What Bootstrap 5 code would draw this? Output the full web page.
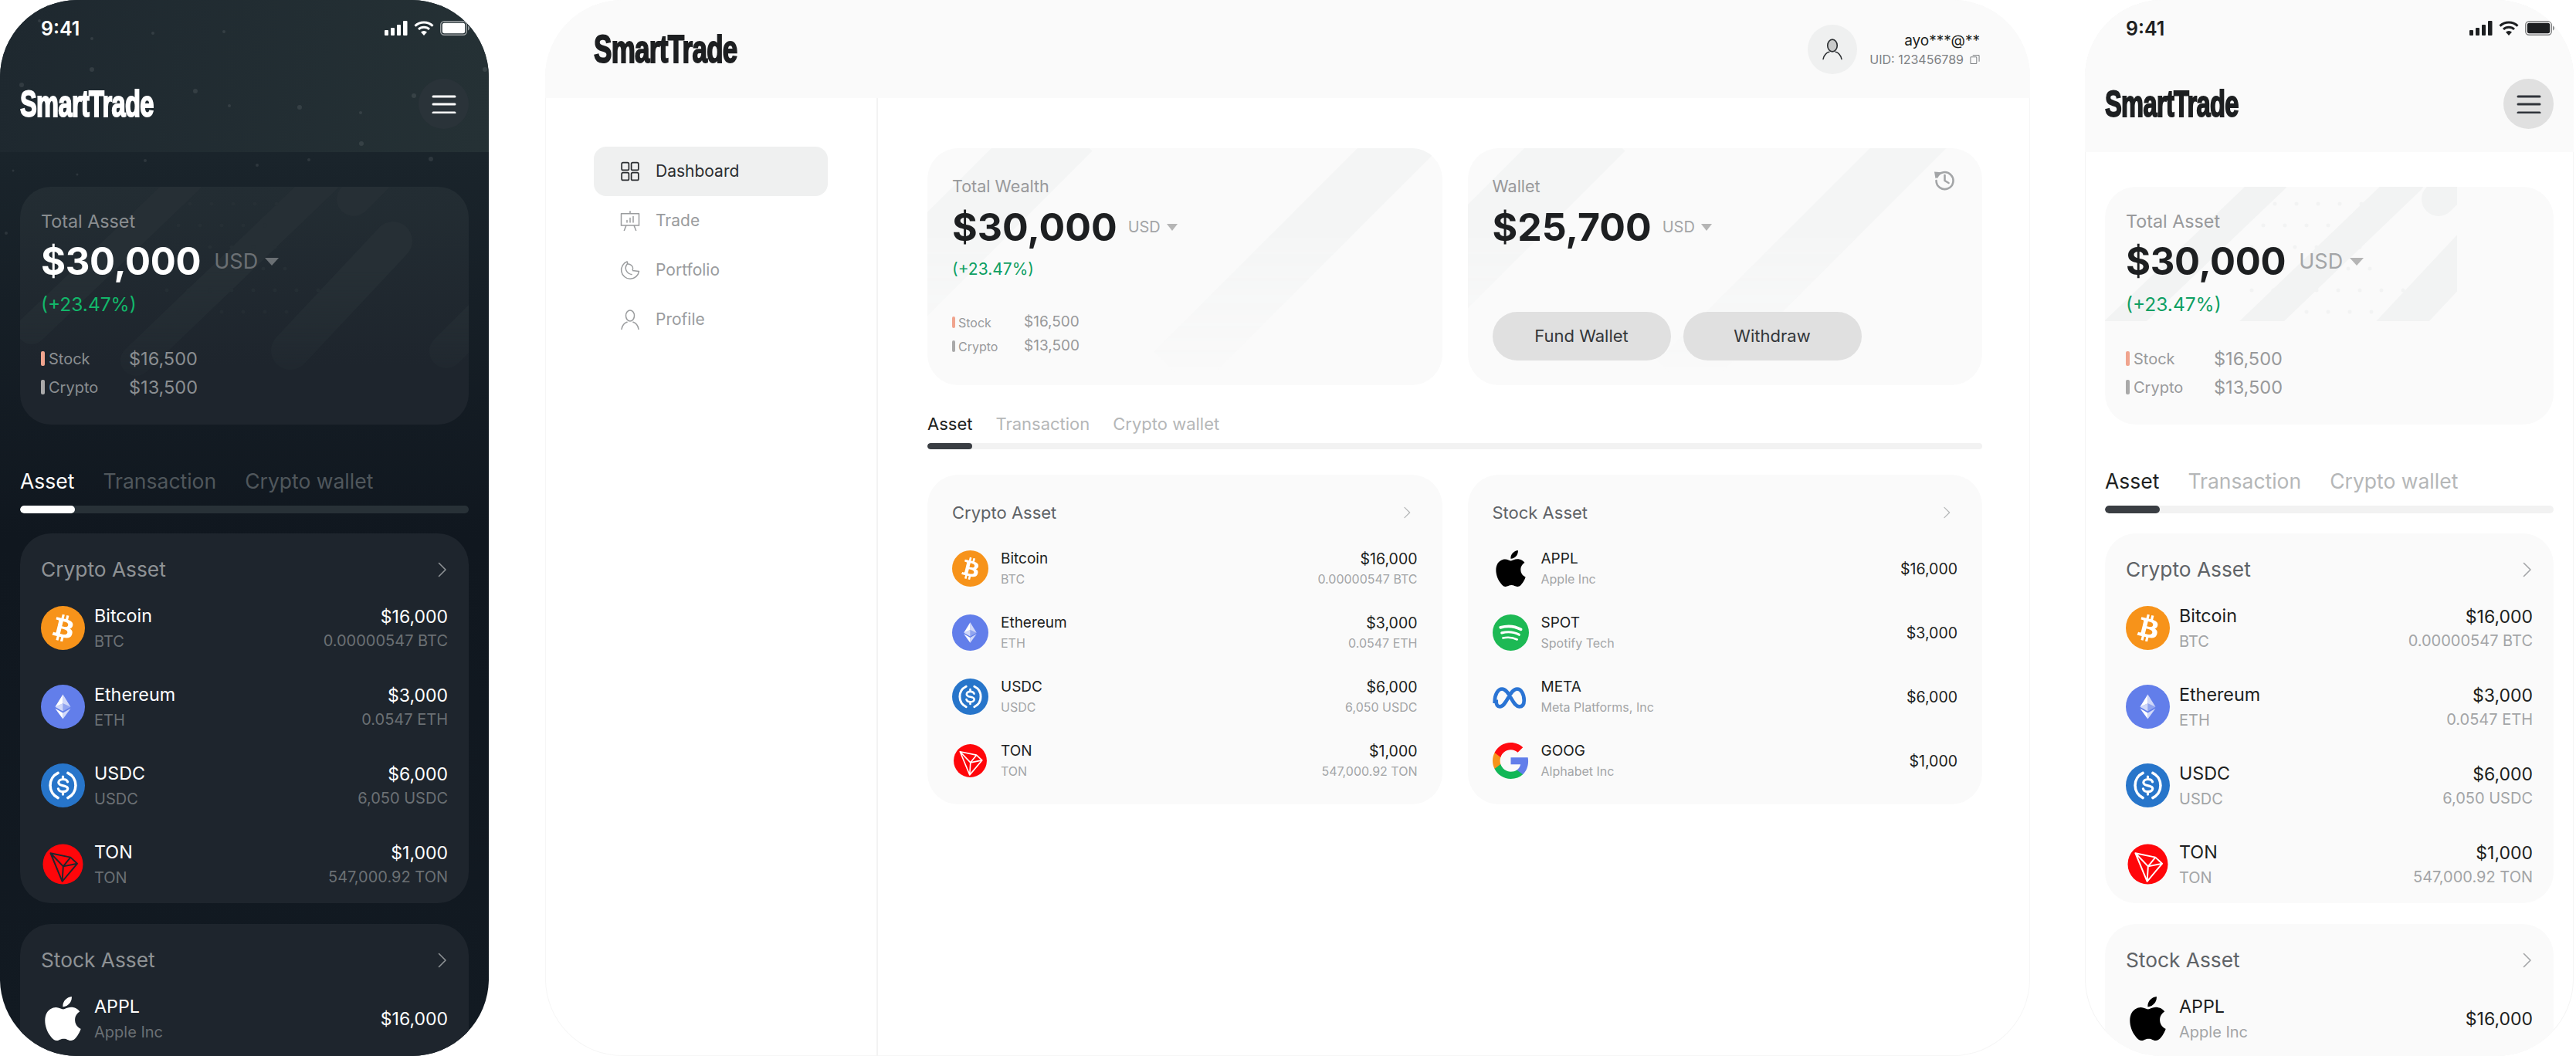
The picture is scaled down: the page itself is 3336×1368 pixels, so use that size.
<!DOCTYPE html>
<html lang="en">
<head>
<meta charset="UTF-8" />
<title>SmartTrade</title>
<link href="https://cdn.jsdelivr.net/npm/bootstrap@5.3.6/dist/css/bootstrap.min.css" rel="stylesheet" crossorigin="anonymous" />
<style>
  html, body { height: 1368px; }
  body { width: 3336px; overflow: hidden; background: #fff; font-family: Inter, "Noto Sans", sans-serif; }
  .shots { width: 3336px; height: 1368px; padding-right: 3px; }

  /* colour sets */
  .tone-dark { --ink:#fff; --title:#8e9295; --muted:#8a8e91; --dim:#6b7074; --faint:#50575c; --frame:#131b22; --bar:#1f2a30; --panel:#1e252d; --track:#283137; --active:#fff; --menu:#2a3339; --menu-line:#fff; --stripe:#262f35; --caret:#6b7074; --gain:#12b76a; }
  .tone-light { --ink:#1d1f21; --title:#5f6367; --muted:#98999b; --dim:#a3a5a7; --faint:#b5b7b8; --frame:#fff; --bar:#fafafa; --panel:#fafafa; --track:#f2f2f2; --active:#3a3e43; --menu:#e0e0e0; --menu-line:#30343a; --stripe:#f2f3f3; --caret:#b5b5b5; --gain:#0e9f63; }

  .brand-word { display: inline-block; font-family: "Liberation Sans", Arial, sans-serif; font-weight: 700; font-size: 48px; line-height: 1; letter-spacing: -1px; color: var(--ink); -webkit-text-stroke: 2px var(--ink); transform: scaleX(.68); transform-origin: left center; white-space: nowrap; }
  .web-top .brand-word { font-size: 50px; transform: scaleX(.7); }

  /* phone frames */
  .phone-frame { position: relative; flex: none; width: 633px; height: 1368px; border-radius: 100px; overflow: hidden; background: var(--frame); color: var(--ink); }
  .tone-dark.phone-frame { background: linear-gradient(180deg, #1a242b 200px, #10171f 700px, #121a22 100%); }
  .tone-light.phone-frame { box-shadow: inset 0 0 0 1px #f4f4f4; }
  .tone-dark .top-bar { background: linear-gradient(100deg, #1e282f, #253135); }
  .tone-light .top-bar { background: var(--bar); }
  .status-line { height: 72px; padding: 0 25px 0 53px; }
  .status-time { font-size: 25px; font-weight: 600; line-height: 1; padding-top: 2px; }
  .brand-line { height: 125px; padding: 0 26px; }
  .menu-btn { width: 65px; height: 65px; background: var(--menu); color: var(--menu-line); padding: 0; border: 0; }
  .star-field { position: absolute; left: 0; top: 0; pointer-events: none; }
  .phone-body { position: relative; padding: 45px 26px 0; }

  /* balance card */
  .balance-card { position: relative; overflow: hidden; background: var(--panel); border: 0; border-radius: 40px; }
  .tone-dark .balance-card { background: linear-gradient(180deg, #232d33, #1e252d 75%); }
  .card-stripes { position: absolute; left: 0; top: 0; color: var(--stripe); -webkit-mask-image: linear-gradient(to bottom, #000 35%, transparent 95%); mask-image: linear-gradient(to bottom, #000 35%, transparent 95%); }
  .tone-light .phone-body .card-stripes { -webkit-mask-image: none; mask-image: none; }
  .balance-inner { position: relative; }
  .phone-body .balance-card { height: 308px; }
  .phone-body .balance-inner { padding: 30px 27px 0; }
  .label-text { color: var(--muted); font-size: 23.3px; line-height: 30px; }
  .amount-line { height: 56px; margin-top: 9px; }
  .amount-value { font-size: 49px; font-weight: 700; letter-spacing: -.3px; line-height: 56px; color: var(--ink); }
  .unit-text { font-size: 27px; color: var(--dim); margin-left: 17px; }
  .unit-caret { width: 0; height: 0; margin-left: 9px; border-left: 9px solid transparent; border-right: 9px solid transparent; border-top: 10px solid var(--caret); }
  .gain-text { color: var(--gain); font-size: 24.5px; line-height: 30px; margin-top: 12px; }
  .split-list { margin-top: 37px; }
  .split-row { height: 37px; }
  .split-bar { width: 5px; height: 19px; border-radius: 2px; background: #a9a9a9; margin-right: 5px; }
  .split-bar.is-stock { background: #f0a48e; }
  .split-name { width: 104px; color: var(--muted); font-size: 20px; }
  .split-sum { color: var(--muted); font-size: 23.5px; }

  /* tabs */
  .tab-strip { margin-top: 55px; gap: 37px; line-height: 36px; font-size: 26.5px; color: var(--faint); }
  .tab-strip .is-on { color: var(--ink); }
  .tab-track { height: 10px; margin-top: 14px; border-radius: 5px; background: var(--track); }
  .tab-track .progress-bar { background: var(--active); border-radius: 5px; }

  /* asset cards */
  .asset-card { background: var(--panel); border: 0; border-radius: 40px; }
  .phone-body .asset-card { margin-top: 26px; padding: 32px 27px 0; height: 479px; }
  .phone-body .asset-card + .asset-card { margin-top: 27px; }
  .asset-title { color: var(--title); font-size: 26.3px; line-height: 30px; }
  .asset-rows { margin-top: 9px; --bs-list-group-bg: transparent; --bs-list-group-border-width: 0; --bs-list-group-item-padding-x: 0; --bs-list-group-item-padding-y: 0; --bs-list-group-color: var(--ink); }
  .asset-row { height: 102px; }
  .coin-mark { width: 57px; height: 57px; flex: none; margin-right: 12px; }
  .asset-name { font-size: 23.3px; line-height: 30px; margin-top: 2px; }
  .asset-sub { color: var(--dim); font-size: 20px; line-height: 30px; margin-top: 3px; }
  .asset-val { font-size: 23px; line-height: 30px; margin-top: 2px; }
  .asset-sub-val { color: var(--dim); font-size: 20px; line-height: 30px; margin-top: 1px; }

  /* desktop frame */
  .web-frame { flex: none; width: 1923px; height: 1368px; margin-left: 2px; border-radius: 100px; overflow: hidden; background: #fff; box-shadow: inset 0 0 0 1px #f6f6f6; color: var(--ink); }
  .web-top { height: 127px; padding: 0 65px 0 63px; background: var(--bar); }
  .avatar-btn { width: 64px; height: 64px; background: #eff0f0; }
  .user-block { padding-top: 3px; }
  .user-mail { font-size: 19px; line-height: 24px; color: #1d1f21; }
  .user-uid { font-size: 16px; line-height: 24px; color: #7d8083; }
  .web-main { height: 1241px; }
  .side-rail { width: 431px; flex: none; border-right: 2px solid #f3f3f3; padding: 63px 63px 0 63px; }
  .side-rail .nav-link { height: 64px; padding: 0 0 0 34px; gap: 20px; border-radius: 16px; font-size: 21px; color: #9a9c9e; }
  .side-rail .nav-link.active { background: #eff0f0; color: #2b2e31; }
  .web-content { flex: 1; padding: 65px 62px 0 64px; }
  .web-grid { display: grid; grid-template-columns: 1fr 1fr; column-gap: 33px; }
  .web-content .balance-card { height: 307px; }
  .web-content .balance-inner { padding: 34px 32px 32px; height: 100%; }
  .web-content .card-stripes { color: #f4f5f5; }
  .web-content .label-text { font-size: 21.5px; }
  .web-content .amount-line { margin-top: 10px; }
  .web-content .amount-value { font-size: 50px; letter-spacing: 0; }
  .web-content .unit-text { font-size: 20px; margin-left: 14px; }
  .web-content .unit-caret { margin-left: 8px; border-width: 9px 7.5px 0; }
  .web-content .gain-text { font-size: 21px; }
  .web-content .split-list { margin-top: 38px; }
  .web-content .split-row { height: 31px; }
  .web-content .split-bar { width: 4px; height: 15px; margin-right: 4px; }
  .web-content .split-name { width: 85px; font-size: 16px; }
  .web-content .split-sum { font-size: 19px; }
  .history-mark { width: 28px; height: 28px; color: #a3a5a7; margin: -7px 3px 0 0; }
  .wallet-btn { width: 231px; height: 63px; padding: 0; border: 0; background: #e0e0e0; color: #34373a; font-size: 22px; }
  .web-content .tab-strip { margin-top: 35px; gap: 30px; font-size: 22px; line-height: 30px; }
  .web-content .tab-track { height: 8px; margin-top: 10px; }
  .web-content .asset-card { margin-top: 33px; height: 427px; padding: 34px 32px 0; }
  .web-content .asset-title { font-size: 22px; }
  .web-content .asset-rows { margin-top: 16px; }
  .web-content .asset-row { height: 83px; }
  .web-content .coin-mark { width: 47px; height: 47px; margin-right: 16px; }
  .web-content .asset-name { font-size: 19px; line-height: 26px; margin-top: 0; }
  .web-content .asset-sub { font-size: 16px; line-height: 26px; margin-top: 0; }
  .web-content .asset-val { font-size: 19.5px; line-height: 26px; margin-top: 0; }
  .web-content .asset-sub-val { font-size: 16px; line-height: 26px; margin-top: 0; }
</style>
</head>
<body>

<!-- icon sheet, reused below with <use> -->
<svg width="0" height="0" class="d-block" aria-hidden="true">
  <symbol id="i-btc" viewBox="0 0 32 32"><circle cx="16" cy="16" r="16" fill="#f7931a"/><path fill="#fff" d="M23.189 14.02c.314-2.096-1.283-3.223-3.465-3.975l.708-2.84-1.728-.43-.69 2.765c-.454-.114-.92-.22-1.385-.326l.695-2.783L15.596 6l-.708 2.839c-.376-.086-.746-.17-1.104-.26l.002-.009-2.384-.595-.46 1.846s1.283.294 1.256.312c.7.175.826.638.805 1.006l-.806 3.235c.048.012.11.03.18.057l-.183-.045-1.13 4.532c-.086.212-.303.531-.793.41.018.025-1.256-.313-1.256-.313l-.858 1.978 2.25.561c.418.105.828.215 1.231.318l-.715 2.872 1.727.43.708-2.84c.472.127.93.245 1.378.357l-.706 2.828 1.728.43.715-2.866c2.948.558 5.164.333 6.097-2.333.752-2.146-.037-3.385-1.588-4.192 1.13-.26 1.98-1.003 2.207-2.538zm-3.95 5.538c-.533 2.147-4.148.986-5.32.695l.95-3.805c1.172.293 4.929.872 4.37 3.11zm.535-5.569c-.487 1.953-3.495.96-4.47.717l.86-3.45c.975.243 4.118.696 3.61 2.733z"/></symbol>
  <symbol id="i-eth" viewBox="0 0 32 32"><circle cx="16" cy="16" r="16" fill="#627eea"/><g transform="translate(3.6 4) scale(.75)"><path fill="#fff" fill-opacity=".7" d="M16.498 4v8.87l7.497 3.35z"/><path fill="#fff" d="M16.498 4L9 16.22l7.498-3.35z"/><path fill="#fff" fill-opacity=".7" d="M16.498 21.968v6.027L24 17.616z"/><path fill="#fff" d="M16.498 27.995v-6.028L9 17.616z"/><path fill="#fff" fill-opacity=".3" d="M16.498 20.573l7.497-4.353-7.497-3.348z"/><path fill="#fff" fill-opacity=".7" d="M9 16.22l7.498 4.353v-7.701z"/></g></symbol>
  <symbol id="i-usdc" viewBox="0 0 32 32"><circle cx="16" cy="16" r="16" fill="#2775ca"/><g fill="none" stroke="#fff" stroke-linecap="round"><path stroke-width="2" d="M12.4 7A10 10 0 0 0 12.4 25M19.6 7A10 10 0 0 1 19.6 25"/><path stroke-width="1.8" d="M19.4 13.4c-.4-1.2-1.7-1.9-3.3-1.9-1.9 0-3.3 1-3.3 2.4 0 3.1 6.7 1.5 6.7 4.4 0 1.4-1.5 2.3-3.4 2.3-1.8 0-3.2-.8-3.5-2.2M16 9.6v1.9M16 20.6v1.9"/></g></symbol>
  <symbol id="i-tron" viewBox="0 0 32 32"><circle cx="16" cy="16" r="14.6" fill="#ff060a"/><path fill="none" stroke="currentColor" stroke-width="1.1" stroke-linejoin="round" d="M7 8l14.5 3 4.9 4.6L15.5 28.5zM7 8l9.2 9.6-.7 10.9M16.2 17.6l10.2-2M16.2 17.6l5.3-6.6"/></symbol>
  <symbol id="i-apple" viewBox="0 0 24 24"><path fill="currentColor" d="M12.152 6.896c-.948 0-2.415-1.078-3.96-1.04-2.04.027-3.91 1.183-4.961 3.014-2.117 3.675-.546 9.103 1.519 12.09 1.013 1.454 2.208 3.09 3.792 3.039 1.52-.065 2.09-.987 3.935-.987 1.831 0 2.35.987 3.96.948 1.637-.026 2.676-1.48 3.676-2.948 1.156-1.688 1.636-3.325 1.662-3.415-.039-.013-3.182-1.221-3.22-4.857-.026-3.04 2.48-4.494 2.597-4.559-1.429-2.09-3.623-2.324-4.39-2.376-2-.156-3.675 1.09-4.61 1.09zM15.53 3.83c.843-1.012 1.4-2.427 1.245-3.83-1.207.052-2.662.805-3.532 1.818-.78.896-1.454 2.338-1.273 3.714 1.338.104 2.715-.688 3.559-1.701"/></symbol>
  <symbol id="i-spot" viewBox="0 0 24 24"><circle cx="12" cy="12" r="12" fill="#1db954"/><g fill="none" stroke="#fff" stroke-linecap="round"><path stroke-width="1.9" d="M5.2 8.6c4.4-1.2 9.6-.8 13.5 1.3"/><path stroke-width="1.6" d="M6 12.2c3.9-1 8.2-.6 11.5 1.2"/><path stroke-width="1.3" d="M6.8 15.6c3.2-.7 6.6-.4 9.4 1"/></g></symbol>
  <symbol id="i-meta" viewBox="0 0 24 24"><path fill="none" stroke="#2a74d4" stroke-width="2.4" d="M1.4 15.2C1.4 10.4 3.6 6.9 6.2 6.9c2.3 0 3.9 2.4 6.1 6.3 2.1 3.6 3.4 5.4 5.3 5.4 2.1 0 3.2-1.6 3.2-4.2 0-4.1-2-7.5-4.6-7.5-2.3 0-3.9 2.3-5.9 5.8-2.2 3.9-3.5 5.9-5.6 5.9-1.5 0-2.3-1.1-2.3-3.4z"/></symbol>
  <symbol id="i-goog" viewBox="1 1 22 22"><path fill="#627eea" d="M22.56 12.25c0-.78-.07-1.53-.2-2.25H12v4.26h5.92c-.26 1.37-1.04 2.53-2.21 3.31v2.77h3.57c2.08-1.92 3.28-4.74 3.28-8.09z"/><path fill="#12b757" d="M12 23c2.97 0 5.46-.98 7.28-2.66l-3.57-2.77c-.98.66-2.23 1.06-3.71 1.06-2.86 0-5.29-1.93-6.16-4.53H2.18v2.84C3.99 20.53 7.7 23 12 23z"/><path fill="#f7931a" d="M5.84 14.09c-.22-.66-.35-1.36-.35-2.09s.13-1.43.35-2.09V7.07H2.18C1.43 8.55 1 10.22 1 12s.43 3.45 1.18 4.93l2.85-2.22.81-.62z"/><path fill="#ff0a10" d="M12 5.38c1.62 0 3.06.56 4.21 1.64l3.15-3.15C17.45 2.09 14.97 1 12 1 7.7 1 3.99 3.47 2.18 7.07l3.66 2.84c.87-2.6 3.3-4.53 6.16-4.53z"/></symbol>
  <symbol id="i-chev" viewBox="0 0 14 20"><path fill="none" stroke="currentColor" stroke-width="1.6" stroke-linecap="round" stroke-linejoin="round" d="M2.5 1.5L11 10l-8.5 8.5"/></symbol>
  <symbol id="i-menu" viewBox="0 0 32 24"><path fill="none" stroke="currentColor" stroke-width="3" stroke-linecap="round" d="M2 2h28M2 12h28M2 23h28"/></symbol>
  <symbol id="i-signal" viewBox="0 0 30 19"><g fill="currentColor"><rect x="0" y="12" width="5" height="7" rx="1"/><rect x="8" y="9" width="5" height="10" rx="1"/><rect x="16" y="5" width="5" height="14" rx="1"/><rect x="24" y="0" width="5.5" height="19" rx="1"/></g></symbol>
  <symbol id="i-wifi" viewBox="0 0 26 19"><g fill="none" stroke="currentColor" stroke-width="3"><path d="M1.5 6.6a16.5 16.5 0 0 1 23 0"/><path d="M6 11a10 10 0 0 1 14 0"/></g><path fill="currentColor" d="M13 19l-4-4.4a6 6 0 0 1 8 0z"/></symbol>
  <symbol id="i-batt" viewBox="0 0 38 19"><rect x=".7" y=".7" width="33.6" height="17.6" rx="4.5" fill="none" stroke="currentColor" stroke-opacity=".55" stroke-width="1.4"/><rect x="2.8" y="2.8" width="29.4" height="13.4" rx="2.6" fill="currentColor"/><path fill="currentColor" fill-opacity=".5" d="M36 6.500v6c1.200-.5 2-1.700 2-3s-.8-2.500-2-3z"/></symbol>
  <symbol id="i-grid" viewBox="0 0 24 24"><g fill="none" stroke="currentColor" stroke-width="1.6"><rect x="2" y="1.500" width="8.500" height="9" rx="1.600"/><rect x="13.500" y="1.500" width="8.500" height="9" rx="1.600"/><rect x="2" y="13.500" width="8.500" height="9" rx="1.600"/><rect x="13.500" y="13.500" width="8.500" height="9" rx="1.600"/></g></symbol>
  <symbol id="i-board" viewBox="0 0 26 26"><g fill="none" stroke="currentColor" stroke-width="1.500" stroke-linecap="round"><path d="M13 .8v3M1.500 3.800h23M1.500 3.800V19h23V3.800M8 19l-2.600 6.500M18 19l2.600 6.500"/><path d="M9 15v-2.500M13 15V9.500M17 15V7.500"/></g></symbol>
  <symbol id="i-pie" viewBox="0 0 26 26"><g fill="none" stroke="currentColor" stroke-width="1.500" stroke-linejoin="round"><path d="M9.500 1.800a11.500 11.500 0 1 0 15 12.600l-8.500-1"/><path d="M16 13.400c1.400-2.700.2-5.700-2.200-7.300-1.500-1-3-1.200-4.300-1.300M9.500 1.800v3c-2.200 2.600-2.900 5.800-1.500 8.700 1.500 3 4.300 4.600 7.600 5.200"/></g></symbol>
  <symbol id="i-person" viewBox="0 0 26 26"><g fill="none" stroke="currentColor" stroke-width="1.500" stroke-linecap="round"><ellipse cx="13" cy="8" rx="5.500" ry="7"/><path d="M2 25.500c.6-5 4-8.400 7-9.200M24 25.500c-.6-5-4-8.400-7-9.200"/></g></symbol>
  <symbol id="i-avatar" viewBox="0 0 24 24"><ellipse cx="12" cy="8" rx="5" ry="6.300" fill="#c9caca" stroke="#2c2f32" stroke-width="1.300"/><path fill="none" stroke="#2c2f32" stroke-width="1.300" stroke-linecap="round" d="M2.500 22c.6-4 3.700-7 6.200-7.400M21.500 22c-.6-4-3.700-7-6.200-7.400"/></symbol>
  <symbol id="i-copy" viewBox="0 0 14 14"><g fill="none" stroke="currentColor" stroke-width="1.100"><rect x="1" y="3.500" width="8.500" height="9.500" rx="1"/><path d="M4 1h8a1 1 0 0 1 1 1v8"/></g></symbol>
  <symbol id="i-history" viewBox="0 0 28 28"><g fill="none" stroke="currentColor" stroke-width="2.600" stroke-linecap="round" stroke-linejoin="round"><path d="M4.500 10.500A11 11 0 1 1 3.500 15"/><path d="M14.500 8v7l5 3"/></g><path fill="currentColor" d="M1 3.500l9 .8-7.500 8z"/></symbol>
  <symbol id="i-stripes" viewBox="0 0 581 308" preserveAspectRatio="xMinYMin slice">
    <g stroke="currentColor" fill="none" stroke-linecap="round">
      <path stroke-width="38" d="M219 -10L15 185"/>
      <path stroke-width="40" d="M395 -10L150 225"/>
      <path stroke-width="44" d="M432 16L470 -22"/>
      <path stroke-width="50" d="M483 70L350 212"/>
      <path stroke-width="44" d="M552 213L640 125"/>
      <g stroke-width="5" stroke-dasharray="0 28">
        <path d="M220 22H340"/><path d="M205 50H340"/><path d="M190 78H350"/><path d="M175 106H370"/><path d="M190 134H390"/><path d="M205 162H400"/>
      </g>
    </g>
  </symbol>
</svg>

<div class="shots d-flex justify-content-between">

  <!-- dark phone -->
  <div class="phone-frame tone-dark">
    <div class="top-bar">
      <div class="status-line d-flex align-items-center justify-content-between">
        <span class="status-time">9:41</span>
        <span class="d-flex align-items-center gap-2">
          <svg width="30" height="19"><use href="#i-signal"/></svg>
          <svg width="26" height="19"><use href="#i-wifi"/></svg>
          <svg width="38" height="19"><use href="#i-batt"/></svg>
        </span>
      </div>
      <div class="brand-line d-flex align-items-center justify-content-between">
        <span class="brand-word">SmartTrade</span>
        <button class="btn menu-btn rounded-circle d-flex align-items-center justify-content-center" type="button" aria-label="Menu"><svg width="32" height="24"><use href="#i-menu"/></svg></button>
      </div>
    </div>
    <svg class="star-field" width="633" height="560" fill="#fff" fill-opacity=".09">
      <circle cx="51" cy="27" r="2"/><circle cx="119" cy="50" r="2"/><circle cx="198" cy="43" r="2"/><circle cx="290" cy="41" r="2"/><circle cx="119" cy="90" r="3"/><circle cx="28" cy="110" r="3"/><circle cx="253" cy="118" r="3"/><circle cx="297" cy="137" r="2"/><circle cx="388" cy="139" r="3"/><circle cx="467" cy="146" r="2"/><circle cx="536" cy="124" r="3"/><circle cx="628" cy="90" r="3"/><circle cx="468" cy="186" r="3"/><circle cx="188" cy="208" r="2"/><circle cx="333" cy="214" r="2"/><circle cx="400" cy="207" r="2"/><circle cx="558" cy="206" r="3"/><circle cx="17" cy="221" r="1.500"/><circle cx="100" cy="226" r="1.500"/><circle cx="8" cy="302" r="2"/>
    </svg>
    <div class="phone-body">
      <div class="card balance-card">
        <svg class="card-stripes" width="581" height="308"><use href="#i-stripes"/></svg>
        <div class="balance-inner">
          <div class="label-text">Total Asset</div>
          <div class="amount-line d-flex align-items-center"><span class="amount-value">$30,000</span><span class="unit-text">USD</span><span class="unit-caret"></span></div>
          <div class="gain-text">(+23.47%)</div>
          <div class="split-list">
            <div class="split-row d-flex align-items-center"><span class="split-bar is-stock"></span><span class="split-name">Stock</span><span class="split-sum">$16,500</span></div>
            <div class="split-row d-flex align-items-center"><span class="split-bar"></span><span class="split-name">Crypto</span><span class="split-sum">$13,500</span></div>
          </div>
        </div>
      </div>
      <div class="tab-strip d-flex"><span class="is-on">Asset</span><span>Transaction</span><span>Crypto wallet</span></div>
      <div class="progress tab-track"><div class="progress-bar" style="width: 12.2%"></div></div>

      <div class="card asset-card">
        <div class="d-flex align-items-center justify-content-between"><span class="asset-title">Crypto Asset</span><svg width="14" height="20" color="#8e9295"><use href="#i-chev"/></svg></div>
        <ul class="list-group asset-rows">
          <li class="list-group-item asset-row d-flex align-items-center"><svg class="coin-mark"><use href="#i-btc"/></svg><div class="flex-grow-1"><div class="asset-name">Bitcoin</div><div class="asset-sub">BTC</div></div><div class="text-end"><div class="asset-val">$16,000</div><div class="asset-sub-val">0.00000547 BTC</div></div></li>
          <li class="list-group-item asset-row d-flex align-items-center"><svg class="coin-mark"><use href="#i-eth"/></svg><div class="flex-grow-1"><div class="asset-name">Ethereum</div><div class="asset-sub">ETH</div></div><div class="text-end"><div class="asset-val">$3,000</div><div class="asset-sub-val">0.0547 ETH</div></div></li>
          <li class="list-group-item asset-row d-flex align-items-center"><svg class="coin-mark"><use href="#i-usdc"/></svg><div class="flex-grow-1"><div class="asset-name">USDC</div><div class="asset-sub">USDC</div></div><div class="text-end"><div class="asset-val">$6,000</div><div class="asset-sub-val">6,050 USDC</div></div></li>
          <li class="list-group-item asset-row d-flex align-items-center"><svg class="coin-mark" color="#1e252d"><use href="#i-tron"/></svg><div class="flex-grow-1"><div class="asset-name">TON</div><div class="asset-sub">TON</div></div><div class="text-end"><div class="asset-val">$1,000</div><div class="asset-sub-val">547,000.92 TON</div></div></li>
        </ul>
      </div>

      <div class="card asset-card">
        <div class="d-flex align-items-center justify-content-between"><span class="asset-title">Stock Asset</span><svg width="14" height="20" color="#8e9295"><use href="#i-chev"/></svg></div>
        <ul class="list-group asset-rows">
          <li class="list-group-item asset-row d-flex align-items-center"><svg class="coin-mark" color="#fff"><use href="#i-apple"/></svg><div class="flex-grow-1"><div class="asset-name">APPL</div><div class="asset-sub">Apple Inc</div></div><div class="text-end"><div class="asset-val">$16,000</div></div></li>
        </ul>
      </div>
    </div>
  </div>

  <!-- desktop -->
  <div class="web-frame tone-light">
    <div class="web-top d-flex align-items-center justify-content-between">
      <span class="brand-word">SmartTrade</span>
      <div class="d-flex align-items-center">
        <span class="avatar-btn rounded-circle d-flex align-items-center justify-content-center me-3"><svg width="30" height="30"><use href="#i-avatar"/></svg></span>
        <div class="text-end user-block">
          <div class="user-mail">ayo***@**</div>
          <div class="user-uid d-flex align-items-center gap-2">UID: 123456789 <svg width="13" height="14"><use href="#i-copy"/></svg></div>
        </div>
      </div>
    </div>
    <div class="web-main d-flex">
      <div class="side-rail">
        <nav class="nav nav-pills flex-column">
          <a class="nav-link active d-flex align-items-center" href="#"><svg width="26" height="26"><use href="#i-grid"/></svg>Dashboard</a>
          <a class="nav-link d-flex align-items-center" href="#"><svg width="26" height="26"><use href="#i-board"/></svg>Trade</a>
          <a class="nav-link d-flex align-items-center" href="#"><svg width="26" height="26"><use href="#i-pie"/></svg>Portfolio</a>
          <a class="nav-link d-flex align-items-center" href="#"><svg width="26" height="26"><use href="#i-person"/></svg>Profile</a>
        </nav>
      </div>
      <div class="web-content">
        <div class="web-grid">
          <div class="card balance-card">
            <svg class="card-stripes" width="664" height="307" viewBox="0 0 664 307" fill="none" stroke="currentColor"><path stroke-width="95" d="M180 -30L-150 300"/><path stroke-width="75" d="M640 -30L320 290"/></svg>
            <div class="balance-inner">
              <div class="label-text">Total Wealth</div>
              <div class="amount-line d-flex align-items-center"><span class="amount-value">$30,000</span><span class="unit-text">USD</span><span class="unit-caret"></span></div>
              <div class="gain-text">(+23.47%)</div>
              <div class="split-list">
                <div class="split-row d-flex align-items-center"><span class="split-bar is-stock"></span><span class="split-name">Stock</span><span class="split-sum">$16,500</span></div>
                <div class="split-row d-flex align-items-center"><span class="split-bar"></span><span class="split-name">Crypto</span><span class="split-sum">$13,500</span></div>
              </div>
            </div>
          </div>
          <div class="card balance-card">
            <svg class="card-stripes" width="664" height="307" viewBox="0 0 664 307" fill="none" stroke="currentColor"><path stroke-width="95" d="M170 -30L-150 290"/><path stroke-width="70" d="M600 -30L270 300"/></svg>
            <div class="balance-inner d-flex flex-column">
              <div class="d-flex justify-content-between align-items-start"><div class="label-text">Wallet</div><svg class="history-mark"><use href="#i-history"/></svg></div>
              <div class="amount-line d-flex align-items-center"><span class="amount-value">$25,700</span><span class="unit-text">USD</span><span class="unit-caret"></span></div>
              <div class="d-flex gap-3 mt-auto">
                <button class="btn wallet-btn rounded-pill" type="button">Fund Wallet</button>
                <button class="btn wallet-btn rounded-pill" type="button">Withdraw</button>
              </div>
            </div>
          </div>
        </div>
        <div class="tab-strip d-flex"><span class="is-on">Asset</span><span>Transaction</span><span>Crypto wallet</span></div>
        <div class="progress tab-track"><div class="progress-bar" style="width: 4.25%"></div></div>
        <div class="web-grid">
          <div class="card asset-card">
            <div class="d-flex align-items-center justify-content-between"><span class="asset-title">Crypto Asset</span><svg class="me-2" width="11" height="16" color="#b5b7b8"><use href="#i-chev"/></svg></div>
            <ul class="list-group asset-rows">
              <li class="list-group-item asset-row d-flex align-items-center"><svg class="coin-mark"><use href="#i-btc"/></svg><div class="flex-grow-1"><div class="asset-name">Bitcoin</div><div class="asset-sub">BTC</div></div><div class="text-end"><div class="asset-val">$16,000</div><div class="asset-sub-val">0.00000547 BTC</div></div></li>
              <li class="list-group-item asset-row d-flex align-items-center"><svg class="coin-mark"><use href="#i-eth"/></svg><div class="flex-grow-1"><div class="asset-name">Ethereum</div><div class="asset-sub">ETH</div></div><div class="text-end"><div class="asset-val">$3,000</div><div class="asset-sub-val">0.0547 ETH</div></div></li>
              <li class="list-group-item asset-row d-flex align-items-center"><svg class="coin-mark"><use href="#i-usdc"/></svg><div class="flex-grow-1"><div class="asset-name">USDC</div><div class="asset-sub">USDC</div></div><div class="text-end"><div class="asset-val">$6,000</div><div class="asset-sub-val">6,050 USDC</div></div></li>
              <li class="list-group-item asset-row d-flex align-items-center"><svg class="coin-mark" color="#fff"><use href="#i-tron"/></svg><div class="flex-grow-1"><div class="asset-name">TON</div><div class="asset-sub">TON</div></div><div class="text-end"><div class="asset-val">$1,000</div><div class="asset-sub-val">547,000.92 TON</div></div></li>
            </ul>
          </div>
          <div class="card asset-card">
            <div class="d-flex align-items-center justify-content-between"><span class="asset-title">Stock Asset</span><svg class="me-2" width="11" height="16" color="#b5b7b8"><use href="#i-chev"/></svg></div>
            <ul class="list-group asset-rows">
              <li class="list-group-item asset-row d-flex align-items-center"><svg class="coin-mark" color="#000"><use href="#i-apple"/></svg><div class="flex-grow-1"><div class="asset-name">APPL</div><div class="asset-sub">Apple Inc</div></div><div class="asset-val">$16,000</div></li>
              <li class="list-group-item asset-row d-flex align-items-center"><svg class="coin-mark"><use href="#i-spot"/></svg><div class="flex-grow-1"><div class="asset-name">SPOT</div><div class="asset-sub">Spotify Tech</div></div><div class="asset-val">$3,000</div></li>
              <li class="list-group-item asset-row d-flex align-items-center"><svg class="coin-mark"><use href="#i-meta"/></svg><div class="flex-grow-1"><div class="asset-name">META</div><div class="asset-sub">Meta Platforms, Inc</div></div><div class="asset-val">$6,000</div></li>
              <li class="list-group-item asset-row d-flex align-items-center"><svg class="coin-mark"><use href="#i-goog"/></svg><div class="flex-grow-1"><div class="asset-name">GOOG</div><div class="asset-sub">Alphabet Inc</div></div><div class="asset-val">$1,000</div></li>
            </ul>
          </div>
        </div>
      </div>
    </div>
  </div>

  <!-- light phone -->
  <div class="phone-frame tone-light">
    <div class="top-bar">
      <div class="status-line d-flex align-items-center justify-content-between">
        <span class="status-time">9:41</span>
        <span class="d-flex align-items-center gap-2">
          <svg width="30" height="19"><use href="#i-signal"/></svg>
          <svg width="26" height="19"><use href="#i-wifi"/></svg>
          <svg width="38" height="19"><use href="#i-batt"/></svg>
        </span>
      </div>
      <div class="brand-line d-flex align-items-center justify-content-between">
        <span class="brand-word">SmartTrade</span>
        <button class="btn menu-btn rounded-circle d-flex align-items-center justify-content-center" type="button" aria-label="Menu"><svg width="32" height="24"><use href="#i-menu"/></svg></button>
      </div>
    </div>
    <div class="phone-body">
      <div class="card balance-card">
        <svg class="card-stripes" width="456" height="174" viewBox="0 0 456 174"><use href="#i-stripes" width="581" height="308"/></svg>
        <div class="balance-inner">
          <div class="label-text">Total Asset</div>
          <div class="amount-line d-flex align-items-center"><span class="amount-value">$30,000</span><span class="unit-text">USD</span><span class="unit-caret"></span></div>
          <div class="gain-text">(+23.47%)</div>
          <div class="split-list">
            <div class="split-row d-flex align-items-center"><span class="split-bar is-stock"></span><span class="split-name">Stock</span><span class="split-sum">$16,500</span></div>
            <div class="split-row d-flex align-items-center"><span class="split-bar"></span><span class="split-name">Crypto</span><span class="split-sum">$13,500</span></div>
          </div>
        </div>
      </div>
      <div class="tab-strip d-flex"><span class="is-on">Asset</span><span>Transaction</span><span>Crypto wallet</span></div>
      <div class="progress tab-track"><div class="progress-bar" style="width: 12.2%"></div></div>

      <div class="card asset-card">
        <div class="d-flex align-items-center justify-content-between"><span class="asset-title">Crypto Asset</span><svg width="14" height="20" color="#a3a5a7"><use href="#i-chev"/></svg></div>
        <ul class="list-group asset-rows">
          <li class="list-group-item asset-row d-flex align-items-center"><svg class="coin-mark"><use href="#i-btc"/></svg><div class="flex-grow-1"><div class="asset-name">Bitcoin</div><div class="asset-sub">BTC</div></div><div class="text-end"><div class="asset-val">$16,000</div><div class="asset-sub-val">0.00000547 BTC</div></div></li>
          <li class="list-group-item asset-row d-flex align-items-center"><svg class="coin-mark"><use href="#i-eth"/></svg><div class="flex-grow-1"><div class="asset-name">Ethereum</div><div class="asset-sub">ETH</div></div><div class="text-end"><div class="asset-val">$3,000</div><div class="asset-sub-val">0.0547 ETH</div></div></li>
          <li class="list-group-item asset-row d-flex align-items-center"><svg class="coin-mark"><use href="#i-usdc"/></svg><div class="flex-grow-1"><div class="asset-name">USDC</div><div class="asset-sub">USDC</div></div><div class="text-end"><div class="asset-val">$6,000</div><div class="asset-sub-val">6,050 USDC</div></div></li>
          <li class="list-group-item asset-row d-flex align-items-center"><svg class="coin-mark" color="#fff"><use href="#i-tron"/></svg><div class="flex-grow-1"><div class="asset-name">TON</div><div class="asset-sub">TON</div></div><div class="text-end"><div class="asset-val">$1,000</div><div class="asset-sub-val">547,000.92 TON</div></div></li>
        </ul>
      </div>

      <div class="card asset-card">
        <div class="d-flex align-items-center justify-content-between"><span class="asset-title">Stock Asset</span><svg width="14" height="20" color="#a3a5a7"><use href="#i-chev"/></svg></div>
        <ul class="list-group asset-rows">
          <li class="list-group-item asset-row d-flex align-items-center"><svg class="coin-mark" color="#000"><use href="#i-apple"/></svg><div class="flex-grow-1"><div class="asset-name">APPL</div><div class="asset-sub">Apple Inc</div></div><div class="asset-val">$16,000</div></li>
        </ul>
      </div>
    </div>
  </div>

</div>

<script src="https://cdn.jsdelivr.net/npm/bootstrap@5.3.6/dist/js/bootstrap.bundle.min.js" crossorigin="anonymous"></script>
</body>
</html>
